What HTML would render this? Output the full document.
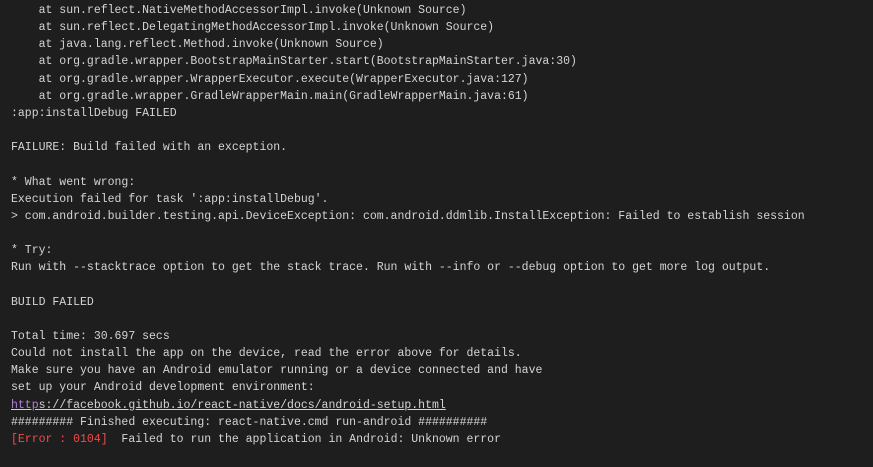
<!DOCTYPE html>
<html><head><style>
html,body{margin:0;padding:0;background:#1e1e1e;width:873px;height:467px;overflow:hidden}
pre{margin:0;padding:2px 0 0 11px;font-family:"Liberation Mono",monospace;font-size:11.5px;line-height:17.16px;color:#d4d4d4;white-space:pre}
.r{color:#f14c4c}
a{color:#d4d4d4;text-decoration:underline}
.p{color:#b180d7}
</style></head><body><pre>    at sun.reflect.NativeMethodAccessorImpl.invoke(Unknown Source)
    at sun.reflect.DelegatingMethodAccessorImpl.invoke(Unknown Source)
    at java.lang.reflect.Method.invoke(Unknown Source)
    at org.gradle.wrapper.BootstrapMainStarter.start(BootstrapMainStarter.java:30)
    at org.gradle.wrapper.WrapperExecutor.execute(WrapperExecutor.java:127)
    at org.gradle.wrapper.GradleWrapperMain.main(GradleWrapperMain.java:61)
:app:installDebug FAILED

FAILURE: Build failed with an exception.

* What went wrong:
Execution failed for task ':app:installDebug'.
&gt; com.android.builder.testing.api.DeviceException: com.android.ddmlib.InstallException: Failed to establish session

* Try:
Run with --stacktrace option to get the stack trace. Run with --info or --debug option to get more log output.

BUILD FAILED

Total time: 30.697 secs
Could not install the app on the device, read the error above for details.
Make sure you have an Android emulator running or a device connected and have
set up your Android development environment:
<a><span class="p">http</span>s://facebook.github.io/react-native/docs/android-setup.html</a>
######### Finished executing: react-native.cmd run-android ##########
<span class="r">[Error : 0104]</span>  Failed to run the application in Android: Unknown error
</pre></body></html>
